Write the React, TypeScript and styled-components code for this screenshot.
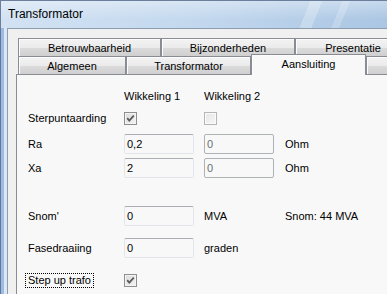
import styled, { createGlobalStyle } from "styled-components";

const GlobalStyle = createGlobalStyle`
	html, body {
		margin: 0;
		padding: 0;
	}
	body {
		font-family: "Liberation Sans", Arial, sans-serif;
		font-size: 11px;
		color: #000;
	}
`;

const Window = styled.div`
	width: 387px;
	height: 294px;
	overflow: hidden;
	display: flex;
	flex-direction: column;
	background: linear-gradient(90deg, #d2e2f3 0%, #c3d8ee 50%, #aac6e3 100%);
`;

const TitleBar = styled.div`
	flex: none;
	height: 28px;
	box-sizing: border-box;
	padding: 6px 0 0 8px;
	font-size: 12px;
	line-height: 15px;
	background: linear-gradient(180deg, rgba(255, 255, 255, 0.35), rgba(255, 255, 255, 0) 70%),
		linear-gradient(112deg, transparent 0 78%, rgba(255, 255, 255, 0.25) 78% 81%, transparent 81% 86%, rgba(255, 255, 255, 0.2) 86% 88%, transparent 88%);
	border-top: 1px solid #6b7f9c;
	box-shadow: inset 1px 0 #6b7f9c;
`;

const Body = styled.div`
	flex: 1;
	display: flex;
	padding-left: 7px;
	background: linear-gradient(90deg, #5f789f 0 1px, #9fbbe0 1px 4px, #dde8f5 4px 7px);
`;

const Client = styled.div`
	flex: 1;
	display: flex;
	flex-direction: column;
	background: #f0f0f0;
	border-top: 1px solid #8c9db2;
	border-left: 1px solid #8c9db2;
	padding: 9px 0 0 8px;
`;

const TabStrip = styled.div`
	display: flex;
	flex-direction: column;
	padding-left: 2px;
`;

const TabRow = styled.div`
	display: flex;
	height: 18px;
`;

const Tab = styled.div<{ $width: number; $selected?: boolean }>`
	flex: none;
	box-sizing: border-box;
	width: ${(p) => p.$width}px;
	height: ${(p) => (p.$selected ? 21 : 18)}px;
	margin-top: ${(p) => (p.$selected ? -2 : 0)}px;
	border: 1px solid #898c95;
	border-bottom: none;
	padding-top: 1px;
	line-height: 16px;
	text-align: center;
	white-space: nowrap;
	position: relative;
	z-index: ${(p) => (p.$selected ? 2 : 0)};
	background: ${(p) =>
		p.$selected
			? "#f8f8f8"
			: "linear-gradient(180deg, #f3f3f3 0%, #ebebeb 50%, #dcdcdc 50%, #cfcfcf 100%)"};
	box-shadow: inset 1px 1px #fcfcfc;
`;

const Panel = styled.div`
	flex: 1;
	background: #f8f8f8;
	border: 1px solid #898c95;
	border-right: none;
	border-bottom: none;
	padding-left: 11px;
	position: relative;
	z-index: 1;
`;

const Row = styled.div<{ $top: number }>`
	display: flex;
	align-items: center;
	height: 20px;
	margin-top: ${(p) => p.$top}px;
	white-space: nowrap;
`;

const Label = styled.div`
	width: 96px;
	flex: none;
	display: flex;
	align-items: center;
`;

const Cell = styled.div<{ $width?: number }>`
	width: ${(p) => (p.$width ? `${p.$width}px` : "auto")};
	flex: none;
	display: flex;
	align-items: center;
`;

const FocusText = styled.span`
	border: 1px dotted #000;
	padding: 0 2px;
	margin-left: -3px;
	line-height: 13px;
`;

const TextBox = styled.input<{ $disabled?: boolean }>`
	box-sizing: border-box;
	width: 70px;
	height: 20px;
	margin: 0;
	padding: 0 0 0 2px;
	font: inherit;
	font-size: 11px;
	outline: none;
	border-radius: 2px;
	background: #f8f8f8;
	color: ${(p) => (p.$disabled ? "#6d6d6d" : "#000")};
	border: 1px solid ${(p) => (p.$disabled ? "#adb2b5" : "#e2e6ec")};
	border-top-color: ${(p) => (p.$disabled ? "#adb2b5" : "#abadb3")};
`;

const Box = styled.div<{ $checked?: boolean }>`
	box-sizing: border-box;
	width: 13px;
	height: 13px;
	border: 1px solid ${(p) => (p.$checked ? "#8e8f8f" : "#b6b6b6")};
	background: ${(p) =>
		p.$checked
			? "linear-gradient(135deg, #dcdcdc, #f2f2f2)"
			: "linear-gradient(135deg, #e6e6e6, #f7f7f7)"};
	box-shadow: inset 0 0 0 1px ${(p) => (p.$checked ? "#f4f4f4" : "#fbfbfb")};
	display: flex;
	align-items: center;
	justify-content: center;
`;

function CheckBox({ checked }: { checked?: boolean }) {
	return (
		<Box $checked={checked}>
			{checked && (
				<svg width="11" height="11" viewBox="0 0 11 11">
					<path d="M2.2 5.2 L4.3 7.6 L8.8 2.6" fill="none" stroke="#5a5a5a" strokeWidth="1.8" />
				</svg>
			)}
		</Box>
	);
}

export default function App() {
	return (
		<>
			<GlobalStyle />
			<Window>
				<TitleBar>Transformator</TitleBar>
				<Body>
					<Client>
						<TabStrip>
							<TabRow>
								<Tab $width={143}>Betrouwbaarheid</Tab>
								<Tab $width={134}>Bijzonderheden</Tab>
								<Tab $width={116}>Presentatie</Tab>
							</TabRow>
							<TabRow>
								<Tab $width={108}>Algemeen</Tab>
								<Tab $width={125}>Transformator</Tab>
								<Tab $width={115} $selected>
									Aansluiting
								</Tab>
								<Tab $width={100} />
							</TabRow>
						</TabStrip>
						<Panel>
							<Row $top={11}>
								<Label />
								<Cell $width={80}>Wikkeling 1</Cell>
								<Cell $width={81}>Wikkeling 2</Cell>
							</Row>
							<Row $top={2}>
								<Label>Sterpuntaarding</Label>
								<Cell $width={80}>
									<CheckBox checked />
								</Cell>
								<Cell $width={81}>
									<CheckBox />
								</Cell>
							</Row>
							<Row $top={6}>
								<Label>Ra</Label>
								<Cell $width={80}>
									<TextBox readOnly value="0,2" />
								</Cell>
								<Cell $width={81}>
									<TextBox readOnly $disabled value="0" />
								</Cell>
								<Cell>Ohm</Cell>
							</Row>
							<Row $top={4}>
								<Label>Xa</Label>
								<Cell $width={80}>
									<TextBox readOnly value="2" />
								</Cell>
								<Cell $width={81}>
									<TextBox readOnly $disabled value="0" />
								</Cell>
								<Cell>Ohm</Cell>
							</Row>
							<Row $top={28}>
								<Label>Snom'</Label>
								<Cell $width={80}>
									<TextBox readOnly value="0" />
								</Cell>
								<Cell $width={81}>MVA</Cell>
								<Cell>Snom: 44 MVA</Cell>
							</Row>
							<Row $top={12}>
								<Label>Fasedraaiing</Label>
								<Cell $width={80}>
									<TextBox readOnly value="0" />
								</Cell>
								<Cell $width={81}>graden</Cell>
							</Row>
							<Row $top={12}>
								<Label>
									<FocusText>Step up trafo</FocusText>
								</Label>
								<Cell $width={80}>
									<CheckBox checked />
								</Cell>
							</Row>
						</Panel>
					</Client>
				</Body>
			</Window>
		</>
	);
}
